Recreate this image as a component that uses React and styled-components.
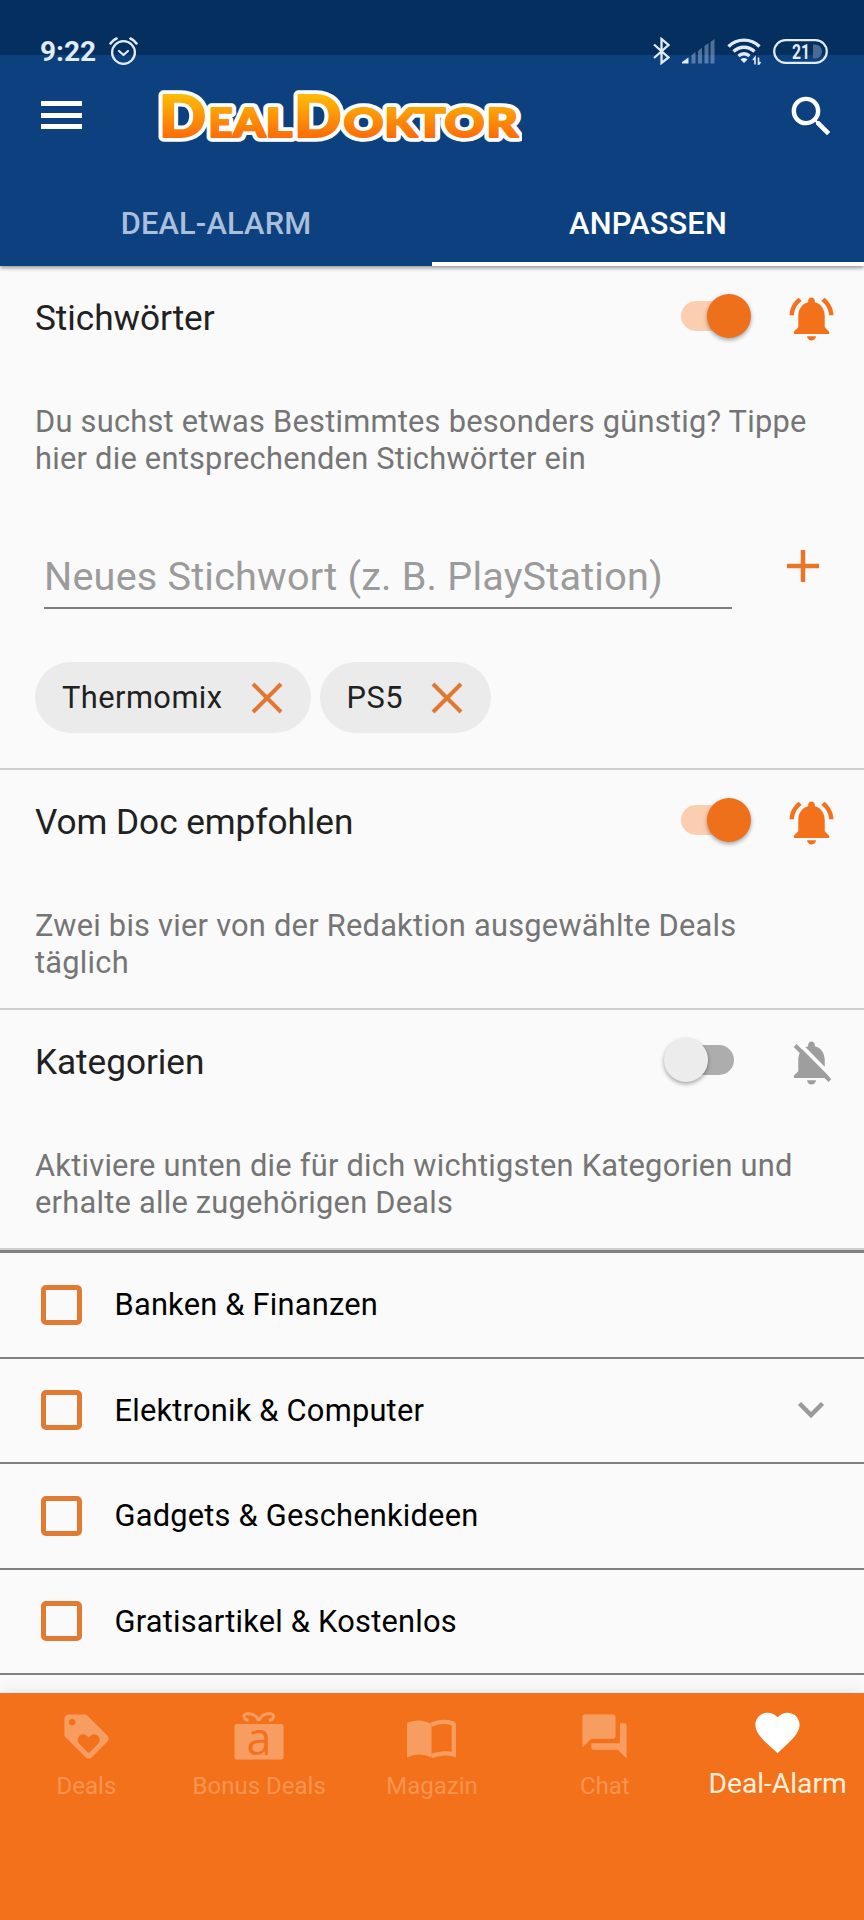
import React from 'react';
import styled, { createGlobalStyle } from 'styled-components';
import {
  MdSearch,
  MdLoyalty,
  MdQuestionAnswer,
  MdFavorite,
} from 'react-icons/md';

const ORANGE = '#f4711c';

const GlobalStyle = createGlobalStyle`
    body {
        margin: 0;
        background: #fafafa;
        font-family: Roboto, sans-serif;
    }
    * {
        box-sizing: border-box;
    }
`

const Screen = styled.div`
    width: 864px;
    height: 1920px;
    display: flex;
    flex-direction: column;
    overflow: hidden;
    background: #fafafa;
`

const Header = styled.header`
    flex: none;
    height: 266px;
    display: flex;
    flex-direction: column;
    color: #fff;
    background: linear-gradient(#052f5f 55px, #0d407e 55px);
    box-shadow: 0 2px 4px rgba(0, 0, 0, 0.4);
    z-index: 1;
`

const StatusBar = styled.div`
    height: 80px;
    padding: 22px 36px 0 40px;
    display: flex;
    justify-content: space-between;
    color: #e0ebfb;
`

const StatusGroup = styled.div`
    height: 58px;
    display: flex;
    align-items: center;
    gap: ${props => props.$gap || 0}px;
`

const Clock = styled.span`
    font-size: 28px;
    font-weight: 700;
`

const Toolbar = styled.div`
    height: 70px;
    padding: 0 26px 0 41px;
    display: flex;
    align-items: center;
`

const MenuButton = styled.div`
    width: 41px;
    height: 28px;
    display: flex;
    flex-direction: column;
    justify-content: space-between;
`

const MenuLine = styled.span`
    height: 5px;
    background: #fff;
`

const LogoBox = styled.div`
    flex: 1;
    padding-left: 68px;
    height: 70px;
`

const SearchButton = styled.div`
    display: flex;
    padding-top: 3px;
`

const Tabs = styled.div`
    flex: 1;
    display: flex;
`

const Tab = styled.div`
    flex: 1;
    display: flex;
    align-items: center;
    justify-content: center;
    padding-top: 35px;
    font-size: 30.8px;
    font-weight: 500;
    letter-spacing: 0.15px;
    color: ${props => props.$active ? '#fff' : '#a9bfdc'};
    border-bottom: ${props => props.$active ? '4px solid #fff' : '4px solid transparent'};
`

const Content = styled.main`
    flex: 1;
    min-height: 0;
    overflow: hidden;
`

const Section = styled.section`
    height: ${props => props.$height}px;
    border-bottom: 2px solid #cfcfcf;
`

const SectionHead = styled.div`
    height: 104px;
    padding: 0 26px 0 35px;
    display: flex;
    align-items: center;
`

const SectionTitle = styled.h2`
    flex: 1;
    margin: 0;
    font-size: 35.2px;
    font-weight: 400;
    letter-spacing: -0.05px;
    color: #212121;
`

const Description = styled.p`
    margin: 0;
    padding: 33px 40px 0 35px;
    font-size: 30.8px;
    line-height: 37px;
    letter-spacing: 0.24px;
    color: #757575;
`

const Switch = styled.div`
    width: 70px;
    height: 44px;
    margin: 0 ${props => props.$on ? 34 : 51}px 4px 0;
    display: grid;
    align-items: center;
`

const Track = styled.span`
    grid-area: 1 / 1;
    height: 30px;
    margin: ${props => props.$on ? '0 8px 0 0' : '0 0 0 8px'};
    border-radius: 15px;
    background: ${props => props.$on ? '#fbceb2' : '#adadad'};
`

const Knob = styled.span`
    grid-area: 1 / 1;
    justify-self: ${props => props.$on ? 'end' : 'start'};
    width: 44px;
    height: 44px;
    border-radius: 50%;
    background: ${props => props.$on ? '#ef701a' : '#ececec'};
    box-shadow: 0 2px 4px rgba(0, 0, 0, 0.35);
`

const KeywordRow = styled.div`
    padding: 59px 44px 0 44px;
    display: flex;
`

const KeywordInput = styled.div`
    width: 688px;
    height: 73px;
    padding-top: 18px;
    font-size: 39.6px;
    line-height: 46px;
    letter-spacing: 0.2px;
    color: #9b9b9b;
    border-bottom: 2px solid #7c7c7c;
`

const AddButton = styled.div`
    padding: 14px 0 0 55px;
`

const Chips = styled.div`
    padding: 53px 35px 0;
    display: flex;
    gap: 9px;
`

const Chip = styled.div`
    height: 71px;
    padding: 0 28px 0 27px;
    display: flex;
    align-items: center;
    gap: 28px;
    border-radius: 36px;
    background: #ebebeb;
    font-size: 30.8px;
    letter-spacing: 0.45px;
    color: #212121;
`

const CategoryList = styled.div`
    border-top: 3px solid #808080;
`

const CategoryRow = styled.div`
    height: 105.5px;
    padding: 0 36px 0 41px;
    display: flex;
    align-items: center;
    border-bottom: 2px solid #808080;
`

const Checkbox = styled.span`
    width: 41px;
    height: 40px;
    margin-right: 32.5px;
    border: 5px solid #e17a33;
    border-radius: 5px;
`

const CategoryName = styled.span`
    flex: 1;
    font-size: 30.8px;
    letter-spacing: 0.22px;
    color: #000;
`

const BottomNav = styled.nav`
    flex: none;
    height: 227px;
    display: flex;
    background: ${ORANGE};
    box-shadow: 0 -2px 16px rgba(0, 0, 0, 0.08);
    z-index: 1;
`

const NavItem = styled.div`
    width: 172.8px;
    padding-top: ${props => props.$active ? 13 : 17}px;
    display: flex;
    flex-direction: column;
    align-items: center;
    gap: ${props => props.$active ? 7 : 5}px;
    color: ${props => props.$active ? '#fff' : '#f89d61'};
`

const NavLabel = styled.span`
    white-space: nowrap;
    font-size: ${props => props.$active ? 28.2 : 24}px;
    line-height: 36px;
    color: ${props => props.$active ? '#fff0dc' : '#f8944f'};
`

const AlarmIcon = () => (
  <svg width="29" height="28" viewBox="0 0 29 28" fill="none" stroke="currentColor" strokeLinecap="round">
    <circle cx="14.5" cy="15.5" r="11.4" strokeWidth="2.3" />
    <path d="M10 14l4.5 4 4.5-4" strokeWidth="2.2" strokeLinejoin="round" />
    <path d="M1.5 6.5Q4 3 7.5 1.5M27.5 6.5Q25 3 21.5 1.5" strokeWidth="2.6" />
  </svg>
)

const BluetoothIcon = () => (
  <svg width="17" height="28" viewBox="0 0 17 28" fill="none" stroke="currentColor" strokeWidth="2.3">
    <path d="M1 7.500L15.500 20.500L8.500 26V2L15.500 8L1 21" />
  </svg>
)

const SignalIcon = () => (
  <svg width="33" height="25" viewBox="0 0 33 25" fill="currentColor">
    <path d="M0 24.5v-1.500l6.500-4.500v6z" />
    <g opacity="0.35">
      <path d="M9.500 16l4-3v11.500h-4zM16 12l4-3.500v16h-4zM22.500 7l4-3v20.500h-4zM28.500 3l4-3v24.500h-4z" />
    </g>
  </svg>
)

const WifiIcon = () => (
  <svg width="34" height="27" viewBox="0 0 34 27" fill="none" stroke="currentColor">
    <path d="M1.500 8.500a22 22 0 0 1 31 0" strokeWidth="3.4" />
    <path d="M6.500 13.500a15 15 0 0 1 21 0" strokeWidth="3.4" />
    <path d="M11.500 18a8 8 0 0 1 11 0" strokeWidth="3.4" />
    <path d="M17 25l-3.500-3.500a5 5 0 0 1 7 0z" fill="currentColor" stroke="none" />
    <path d="M28 26.500v-7l-2 2.500M31.500 19.500v7l2-2.500" strokeWidth="1.6" />
  </svg>
)

const BatteryIcon = () => (
  <svg width="55" height="25" viewBox="0 0 55 25">
    <path d="M40 5.500h2a7 7 0 0 1 0 14h-2z" fill="#4a6b92" />
    <rect x="1.200" y="1.200" width="52.600" height="22.600" rx="11.300" fill="none" stroke="currentColor" strokeWidth="2.200" />
    <text x="19" y="19.500" textLength="18" lengthAdjust="spacingAndGlyphs" fontSize="20" fontWeight="700" fill="currentColor">21</text>
  </svg>
)

// big initials, small capitals in between
const LOGO_LETTERS = [
  { char: 'D', x: 9, width: 47, big: true },
  { char: 'E', x: 58.5, width: 24 },
  { char: 'A', x: 83, width: 32.5 },
  { char: 'L', x: 115.4, width: 26.7 },
  { char: 'D', x: 144, width: 47.4, big: true },
  { char: 'O', x: 193.6, width: 40 },
  { char: 'K', x: 234.4, width: 32.6 },
  { char: 'T', x: 264.6, width: 31 },
  { char: 'O', x: 294.6, width: 40 },
  { char: 'R', x: 336.4, width: 31.5 },
]

const LogoText = (props) => (
  <g fontFamily="Lato" fontWeight="900" strokeLinejoin="round" {...props}>
    {LOGO_LETTERS.map((letter, i) => (
      <text
        key={i}
        x={letter.x}
        y="56.5"
        textLength={letter.width}
        lengthAdjust="spacingAndGlyphs"
        fontSize={letter.big ? 57 : 39.5}
      >
        {letter.char}
      </text>
    ))}
  </g>
)

const Logo = () => (
  <svg width="372" height="70" viewBox="0 0 372 70">
    <defs>
      <linearGradient id="logoFill" gradientUnits="userSpaceOnUse" x1="0" y1="15" x2="0" y2="57">
        <stop offset="0" stopColor="#fdbb06" />
        <stop offset="1" stopColor="#fb6d0a" />
      </linearGradient>
    </defs>
    <LogoText aria-hidden="true" fill="#fff" stroke="#fff" strokeWidth="9.5" />
    <LogoText fill="url(#logoFill)" stroke="url(#logoFill)" strokeWidth="2" />
  </svg>
)

const BELL = 'M12 22c1.1 0 2-.9 2-2h-4c0 1.1.9 2 2 2zm6-6v-5c0-3.07-1.63-5.64-4.5-6.32V4c0-.83-.67-1.5-1.5-1.5s-1.5.67-1.5 1.5v.68C7.64 5.36 6 7.92 6 11v5l-2 2v1h16v-1l-2-2z'

const BellIcon = ({ on }) => (
  <svg width="53" height="53" viewBox="0 0 24 24" fill={on ? ORANGE : '#9e9e9e'}>
    <path d={BELL} />
    {on ? (
      <path d="M7.58 4.08L6.15 2.65C3.75 4.48 2.17 7.3 2.03 10.5h2c.15-2.65 1.51-4.97 3.55-6.42zM19.97 10.5h2c-.15-3.2-1.73-6.02-4.12-7.85l-1.42 1.43c2.02 1.45 3.39 3.77 3.54 6.42z" />
    ) : (
      <g>
        <path d="M5.8 2.800L21.500 18.700" stroke="#fafafa" strokeWidth="1.7" />
        <path d="M4.600 4.300L20.300 20.200" stroke="#9e9e9e" strokeWidth="1.8" />
      </g>
    )}
  </svg>
)

const CrossIcon = () => (
  <svg width="32" height="32" viewBox="0 0 32 32" stroke="#e27732" strokeWidth="4">
    <path d="M2 2l28 28M30 2L2 30" />
  </svg>
)

const PlusIcon = () => (
  <svg width="32" height="32" viewBox="0 0 32 32" stroke="#e97528" strokeWidth="4.5">
    <path d="M16 0v32M0 16h32" />
  </svg>
)

const ChevronIcon = () => (
  <svg width="34" height="20" viewBox="0 0 34 20" fill="none" stroke="#9a9a9a" strokeWidth="4.5">
    <path d="M5.500 3.500l11.500 11.500L28.500 3.500" />
  </svg>
)

const GiftIcon = () => (
  <svg width="50" height="53" viewBox="0 -2 50 53" overflow="visible">
    <path
      d="M24.7 8.500Q21 1.500 14 1.500Q8.500 2 10.500 6Q11.500 8 14.500 8.500M24.700 8.500Q28.500 1.500 35.500 1.500Q41 2 39 6Q38 8 35 8.500"
      fill="none"
      stroke="currentColor"
      strokeWidth="3.2"
    />
    <rect x="0.5" y="12" width="49" height="35.500" rx="2" fill="currentColor" />
    <text x="25" y="42.500" textAnchor="middle" fontFamily="Open Sans" fontSize="45" fontWeight="500" fill={ORANGE}>a</text>
  </svg>
)

const BookIcon = () => (
  <svg width="49" height="53" viewBox="0 0 49 53">
    <path d="M0 14Q0 12.500 2 12Q14 8 24.500 14V47.500Q12 41.500 0 47.500z" fill="currentColor" />
    <path d="M24.500 14.500Q35 10 45.500 13.200Q46.800 13.500 46.800 14.500V44.500Q36 41.500 24.500 46" fill="none" stroke="currentColor" strokeWidth="4.2" />
  </svg>
)

const NAV_ITEMS = [
  { label: 'Deals', icon: <MdLoyalty size={53} /> },
  { label: 'Bonus Deals', icon: <GiftIcon /> },
  { label: 'Magazin', icon: <BookIcon /> },
  { label: 'Chat', icon: <MdQuestionAnswer size={53} /> },
  { label: 'Deal-Alarm', icon: <MdFavorite size={53} />, active: true },
]

const CATEGORIES = [
  { name: 'Banken & Finanzen' },
  { name: 'Elektronik & Computer', expandable: true },
  { name: 'Gadgets & Geschenkideen' },
  { name: 'Gratisartikel & Kostenlos' },
]

const AlarmSection = ({ title, text, on, height, children }) => (
  <Section $height={height}>
    <SectionHead>
      <SectionTitle>{title}</SectionTitle>
      <Switch $on={on}>
        <Track $on={on} />
        <Knob $on={on} />
      </Switch>
      <BellIcon on={on} />
    </SectionHead>
    <Description>{text}</Description>
    {children}
  </Section>
)

class App extends React.Component {
    state = {
        keywords: ['Thermomix', 'PS5'],
    };

    removeKeyword = (keyword) => {
        this.setState({ keywords: this.state.keywords.filter(k => k !== keyword) });
    };

    render() {
      return (
        <Screen>
            <GlobalStyle />
            <Header>
                <StatusBar>
                    <StatusGroup $gap={13}>
                        <Clock>9:22</Clock>
                        <AlarmIcon />
                    </StatusGroup>
                    <StatusGroup $gap={12}>
                        <BluetoothIcon />
                        <SignalIcon />
                        <WifiIcon />
                        <BatteryIcon />
                    </StatusGroup>
                </StatusBar>
                <Toolbar>
                    <MenuButton>
                        <MenuLine />
                        <MenuLine />
                        <MenuLine />
                    </MenuButton>
                    <LogoBox><Logo /></LogoBox>
                    <SearchButton><MdSearch size={53} /></SearchButton>
                </Toolbar>
                <Tabs>
                    <Tab>DEAL-ALARM</Tab>
                    <Tab $active>ANPASSEN</Tab>
                </Tabs>
            </Header>
            <Content>
                <AlarmSection
                    on
                    height={504}
                    title="Stichwörter"
                    text="Du suchst etwas Bestimmtes besonders günstig? Tippe hier die entsprechenden Stichwörter ein"
                >
                    <KeywordRow>
                        <KeywordInput>Neues Stichwort (z. B. PlayStation)</KeywordInput>
                        <AddButton><PlusIcon /></AddButton>
                    </KeywordRow>
                    <Chips>
                        {
                            this.state.keywords.map(keyword => (
                                <Chip key={keyword} onClick={() => this.removeKeyword(keyword)}>
                                    {keyword}
                                    <CrossIcon />
                                </Chip>
                            ))
                        }
                    </Chips>
                </AlarmSection>
                <AlarmSection
                    on
                    height={240}
                    title="Vom Doc empfohlen"
                    text="Zwei bis vier von der Redaktion ausgewählte Deals täglich"
                />
                <AlarmSection
                    height={240}
                    title="Kategorien"
                    text="Aktiviere unten die für dich wichtigsten Kategorien und erhalte alle zugehörigen Deals"
                />
                <CategoryList>
                    {
                        CATEGORIES.map(category => (
                            <CategoryRow key={category.name}>
                                <Checkbox />
                                <CategoryName>{category.name}</CategoryName>
                                {category.expandable && <ChevronIcon />}
                            </CategoryRow>
                        ))
                    }
                </CategoryList>
            </Content>
            <BottomNav>
                {
                    NAV_ITEMS.map(item => (
                        <NavItem key={item.label} $active={item.active}>
                            {item.icon}
                            <NavLabel $active={item.active}>{item.label}</NavLabel>
                        </NavItem>
                    ))
                }
            </BottomNav>
        </Screen>
      );
    }
}

export default App;
